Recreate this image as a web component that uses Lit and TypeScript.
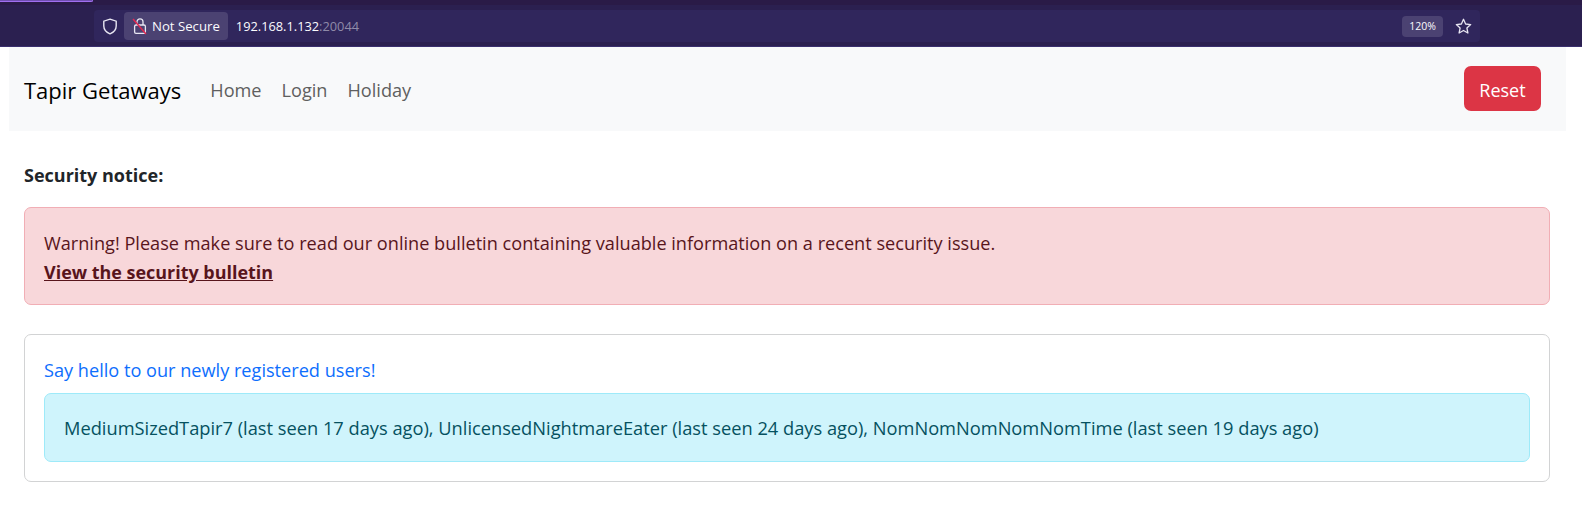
import { LitElement, html, css } from "lit";
import { customElement } from "lit/decorators.js";

@customElement("app-root")
export class AppRoot extends LitElement {
  static styles = css`
    :host { display: block; background: #fff; min-height: 521px; font-family: "Open Sans", "Noto Sans", sans-serif; color: #212529; font-size: 18.15px; }
    .chrome { height: 47px; box-sizing: border-box; background: #2b2050; border-bottom: 1px solid #3a2f6e; display: flex; flex-direction: column; }
    .tabs { height: 5px; background: #2a1b47; flex: none; display: flex; align-items: flex-start; }
    .tab { width: 93px; height: 2px; box-sizing: border-box; background: #6f4fb0; border-bottom: 1px solid #a06ff0; border-right: 1px solid #a06ff0; border-bottom-right-radius: 2px; }
    .tool { flex: 1; display: flex; padding: 5px 102px 4px 94px; }
    .url { flex: 1; background: #30265c; border-radius: 4px; display: flex; align-items: center; color: #fbfbfe; font-size: 12.8px; padding: 0 8px 0 0; }
    .shield { margin: 0 6px 0 8px; }
    .badge { display: flex; align-items: center; gap: 4px; height: 28px; padding: 0 8px; background: #4b4272; border-radius: 4px; margin-right: 8px; font-size: 13.2px; }
    .dim { color: #8f8aa8; }
    .grow { flex: 1; }
    .zoom { background: #4b4272; border-radius: 4px; padding: 0 7px; height: 21px; line-height: 21px; font-size: 10.5px; margin-right: 12px; }
    .page { padding: 0 16px 0 9px; }
    .nav { height: 84px; background: #f8f9fa; display: flex; align-items: center; padding: 0 25px 0 15px; }
    .brand { font-size: 22px; color: #000; margin-right: 29px; padding-top: 2px; }
    .link { font-size: 18.15px; color: #5f5f5f; margin-right: 20px; padding-top: 2px; }
    .btn { background: #dc3545; color: #fff; border-radius: 7px; font-size: 18px; width: 77px; height: 45px; display: flex; align-items: center; justify-content: center; margin-top: -2px; padding-top: 3px; box-sizing: border-box; }
    .content { padding: 0 16px 0 15px; }
    h6 { margin: 0; padding: 33px 0 20px; font-size: 18px; font-weight: 700; line-height: 23px; color: #212529; }
    .alert { border: 1px solid; border-radius: 7px; padding: 21px 19px 17px; line-height: 29px; }
    .danger { background: #f8d7da; border-color: #f1aeb5; color: #58151c; }
    .danger a { font-weight: 700; font-size: 17.95px; color: #58151c; text-decoration: underline; display: block; }
    .card { margin-top: 29px; border: 1px solid #d2d3d4; border-radius: 7px; padding: 21px 19px 19px; }
    .hello { color: #0d6efd; line-height: 29px; margin: 0 0 8px; height: 29px; }
    .alert.info { background: #cff4fc; border-color: #9eeaf9; color: #055160; margin: 0; font-size: 18.26px; padding: 19px; }
  `;

  render() {
    return html`
      <div class="chrome">
        <div class="tabs"><div class="tab"></div></div>
        <div class="tool">
          <div class="url">
            <svg class="shield" width="16" height="17" viewBox="0 0 16 17" fill="none" stroke="#e8e6f2" stroke-width="1.4">
              <path d="M8 1.200 14.200 3.200V8c0 3.800-2.600 6.300-6.200 7.800C4.400 14.300 1.800 11.800 1.800 8V3.200Z" />
            </svg>
            <div class="badge">
              <svg width="16" height="18" viewBox="0 0 16 18" fill="none">
                <path d="M5 8V4.800a3 3 0 0 1 6 0V8" stroke="#e8e6f2" stroke-width="1.3" />
                <rect x="2.600" y="8" width="10.800" height="8.400" rx="1.400" stroke="#e8e6f2" stroke-width="1.300" />
                <path d="M1 2 14 17" stroke="#e22850" stroke-width="1.500" />
              </svg>
              <span>Not Secure</span>
            </div>
            <span>192.168.1.132<span class="dim">:20044</span></span>
            <div class="grow"></div>
            <div class="zoom">120%</div>
            <svg width="17" height="17" viewBox="0 0 17 17" fill="none" stroke="#e8e6f2" stroke-width="1.3" stroke-linejoin="round">
              <path d="M8.500 1.300 10.600 6l5.100.6-3.800 3.400 1 5-4.400-2.500L4.100 15l1-5L1.300 6.600 6.400 6Z" />
            </svg>
          </div>
        </div>
      </div>
      <div class="page">
        <nav class="nav">
          <span class="brand">Tapir Getaways</span>
          <span class="link">Home</span>
          <span class="link">Login</span>
          <span class="link">Holiday</span>
          <div class="grow"></div>
          <div class="btn">Reset</div>
        </nav>
        <div class="content">
          <h6>Security notice:</h6>
          <div class="alert danger">
            Warning! Please make sure to read our online bulletin containing valuable information on a recent security issue.
            <a href="#">View the security bulletin</a>
          </div>
          <div class="card">
            <div class="hello">Say hello to our newly registered users!</div>
            <div class="alert info">MediumSizedTapir7 (last seen 17 days ago), UnlicensedNightmareEater (last seen 24 days ago), NomNomNomNomNomTime (last seen 19 days ago)</div>
          </div>
        </div>
      </div>
    `;
  }
}
